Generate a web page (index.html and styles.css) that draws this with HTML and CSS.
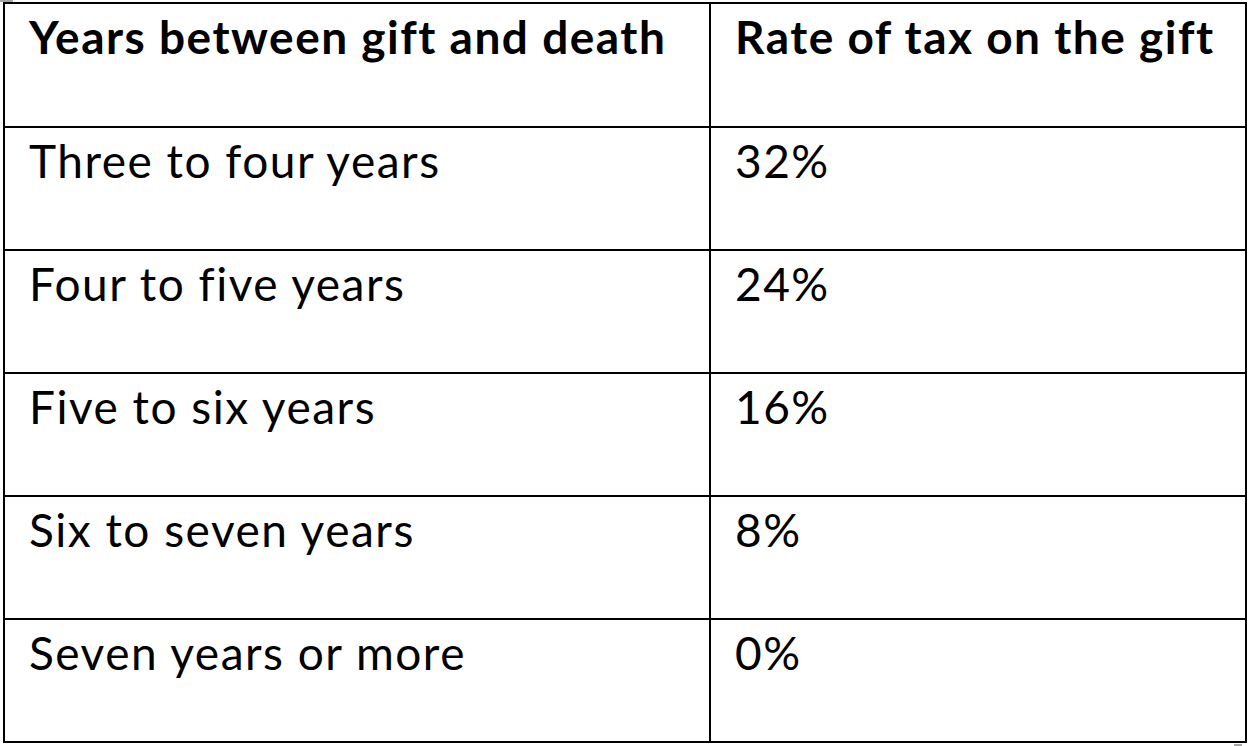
FILE: index.html
```html
<!DOCTYPE html>
<html lang="en">
<head>
<meta charset="utf-8">
<title>Gift tax taper</title>
<link rel="stylesheet" href="styles.css">
</head>
<body>
<div class="page">
  <span class="mark mark-tl"></span>
  <table class="rates">
    <thead>
      <tr>
        <th class="col-years">Years between gift and death</th>
        <th class="col-rate">Rate of tax on the gift</th>
      </tr>
    </thead>
    <tbody>
      <tr><td>Three to four years</td><td>32%</td></tr>
      <tr><td>Four to five years</td><td>24%</td></tr>
      <tr><td>Five to six years</td><td>16%</td></tr>
      <tr><td>Six to seven years</td><td>8%</td></tr>
      <tr><td>Seven years or more</td><td>0%</td></tr>
    </tbody>
  </table>
  <span class="mark mark-br"></span>
</div>
</body>
</html>
```
FILE: styles.css
```css
html, body {
  margin: 0;
  padding: 0;
  background: #ffffff;
}

.page {
  position: relative;
  width: 1250px;
  height: 746px;
  overflow: hidden;
  padding: 2px 0 0 3px;
  box-sizing: border-box;
}

.rates {
  border-collapse: collapse;
  width: 1244px;
  table-layout: fixed;
  font-family: Lato, "Open Sans", sans-serif;
  color: #000000;
}

.col-years { width: 706px; }

.rates th,
.rates td {
  border: 2px solid #000000;
  height: 123px;
  padding: 0 0 0 24px;
  vertical-align: top;
  text-align: left;
  font-size: 46px;
  letter-spacing: 1.5px;
  line-height: 66px;
  box-sizing: border-box;
}

.rates th {
  font-weight: 700;
  height: 124px;
}

.rates td {
  font-weight: 400;
}

.mark {
  position: absolute;
  background: #a6a6a6;
}

.mark-tl {
  left: 0;
  top: 0;
  width: 13px;
  height: 2px;
}

.mark-br {
  left: 1234px;
  top: 744px;
  width: 8px;
  height: 2px;
}
```
